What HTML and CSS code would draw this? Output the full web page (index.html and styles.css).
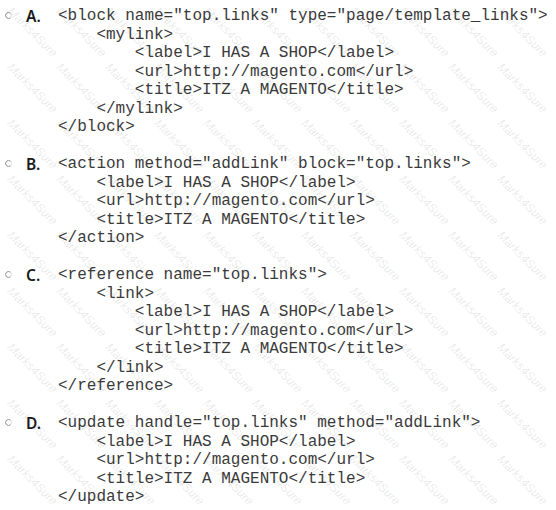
FILE: index.html
```html
<!DOCTYPE html>
<html lang="en">
<head>
<meta charset="utf-8">
<title>Layout XML options</title>
<link rel="stylesheet" href="styles.css">
</head>
<body>
<div class="page">
  <div class="watermark" aria-hidden="true">
    <span class="wm">Marks4Sure</span><span class="wm">Marks4Sure</span><span class="wm">Marks4Sure</span><span class="wm">Marks4Sure</span><span class="wm">Marks4Sure</span><span class="wm">Marks4Sure</span><span class="wm">Marks4Sure</span><span class="wm">Marks4Sure</span><span class="wm">Marks4Sure</span><span class="wm">Marks4Sure</span><span class="wm">Marks4Sure</span>
    <span class="wm">Marks4Sure</span><span class="wm">Marks4Sure</span><span class="wm">Marks4Sure</span><span class="wm">Marks4Sure</span><span class="wm">Marks4Sure</span><span class="wm">Marks4Sure</span><span class="wm">Marks4Sure</span><span class="wm">Marks4Sure</span><span class="wm">Marks4Sure</span><span class="wm">Marks4Sure</span><span class="wm">Marks4Sure</span>
    <span class="wm">Marks4Sure</span><span class="wm">Marks4Sure</span><span class="wm">Marks4Sure</span><span class="wm">Marks4Sure</span><span class="wm">Marks4Sure</span><span class="wm">Marks4Sure</span><span class="wm">Marks4Sure</span><span class="wm">Marks4Sure</span><span class="wm">Marks4Sure</span><span class="wm">Marks4Sure</span><span class="wm">Marks4Sure</span>
    <span class="wm">Marks4Sure</span><span class="wm">Marks4Sure</span><span class="wm">Marks4Sure</span><span class="wm">Marks4Sure</span><span class="wm">Marks4Sure</span><span class="wm">Marks4Sure</span><span class="wm">Marks4Sure</span><span class="wm">Marks4Sure</span><span class="wm">Marks4Sure</span><span class="wm">Marks4Sure</span><span class="wm">Marks4Sure</span>
    <span class="wm">Marks4Sure</span><span class="wm">Marks4Sure</span><span class="wm">Marks4Sure</span><span class="wm">Marks4Sure</span><span class="wm">Marks4Sure</span><span class="wm">Marks4Sure</span><span class="wm">Marks4Sure</span><span class="wm">Marks4Sure</span><span class="wm">Marks4Sure</span><span class="wm">Marks4Sure</span><span class="wm">Marks4Sure</span>
    <span class="wm">Marks4Sure</span><span class="wm">Marks4Sure</span><span class="wm">Marks4Sure</span><span class="wm">Marks4Sure</span><span class="wm">Marks4Sure</span><span class="wm">Marks4Sure</span><span class="wm">Marks4Sure</span><span class="wm">Marks4Sure</span><span class="wm">Marks4Sure</span><span class="wm">Marks4Sure</span><span class="wm">Marks4Sure</span>
    <span class="wm">Marks4Sure</span><span class="wm">Marks4Sure</span><span class="wm">Marks4Sure</span><span class="wm">Marks4Sure</span><span class="wm">Marks4Sure</span><span class="wm">Marks4Sure</span><span class="wm">Marks4Sure</span><span class="wm">Marks4Sure</span><span class="wm">Marks4Sure</span><span class="wm">Marks4Sure</span><span class="wm">Marks4Sure</span>
    <span class="wm">Marks4Sure</span><span class="wm">Marks4Sure</span><span class="wm">Marks4Sure</span><span class="wm">Marks4Sure</span><span class="wm">Marks4Sure</span><span class="wm">Marks4Sure</span><span class="wm">Marks4Sure</span><span class="wm">Marks4Sure</span><span class="wm">Marks4Sure</span><span class="wm">Marks4Sure</span><span class="wm">Marks4Sure</span>
    <span class="wm">Marks4Sure</span><span class="wm">Marks4Sure</span><span class="wm">Marks4Sure</span><span class="wm">Marks4Sure</span><span class="wm">Marks4Sure</span><span class="wm">Marks4Sure</span><span class="wm">Marks4Sure</span><span class="wm">Marks4Sure</span><span class="wm">Marks4Sure</span><span class="wm">Marks4Sure</span><span class="wm">Marks4Sure</span>
  </div>

  <div class="options">
    <div class="option">
      <span class="radio"><svg width="7" height="7" viewBox="0 0 7 7"><path d="M5.6 1.3 A3 3 0 1 0 5.6 5.7" fill="none" stroke="#8a8a8a" stroke-width="1"/><path d="M5.6 1.3 A3 3 0 0 1 5.6 5.7" fill="none" stroke="#dadada" stroke-width="1"/></svg></span>
      <span class="letter">A.</span>
      <pre class="code">&lt;block name="top.links" type="page/template_links"&gt;
    &lt;mylink&gt;
        &lt;label&gt;I HAS A SHOP&lt;/label&gt;
        &lt;url&gt;http://magento.com&lt;/url&gt;
        &lt;title&gt;ITZ A MAGENTO&lt;/title&gt;
    &lt;/mylink&gt;
&lt;/block&gt;</pre>
    </div>

    <div class="option">
      <span class="radio"><svg width="7" height="7" viewBox="0 0 7 7"><path d="M5.6 1.3 A3 3 0 1 0 5.6 5.7" fill="none" stroke="#8a8a8a" stroke-width="1"/><path d="M5.6 1.3 A3 3 0 0 1 5.6 5.7" fill="none" stroke="#dadada" stroke-width="1"/></svg></span>
      <span class="letter">B.</span>
      <pre class="code">&lt;action method="addLink" block="top.links"&gt;
    &lt;label&gt;I HAS A SHOP&lt;/label&gt;
    &lt;url&gt;http://magento.com&lt;/url&gt;
    &lt;title&gt;ITZ A MAGENTO&lt;/title&gt;
&lt;/action&gt;</pre>
    </div>

    <div class="option">
      <span class="radio"><svg width="7" height="7" viewBox="0 0 7 7"><path d="M5.6 1.3 A3 3 0 1 0 5.6 5.7" fill="none" stroke="#8a8a8a" stroke-width="1"/><path d="M5.6 1.3 A3 3 0 0 1 5.6 5.7" fill="none" stroke="#dadada" stroke-width="1"/></svg></span>
      <span class="letter">C.</span>
      <pre class="code">&lt;reference name="top.links"&gt;
    &lt;link&gt;
        &lt;label&gt;I HAS A SHOP&lt;/label&gt;
        &lt;url&gt;http://magento.com&lt;/url&gt;
        &lt;title&gt;ITZ A MAGENTO&lt;/title&gt;
    &lt;/link&gt;
&lt;/reference&gt;</pre>
    </div>

    <div class="option">
      <span class="radio"><svg width="7" height="7" viewBox="0 0 7 7"><path d="M5.6 1.3 A3 3 0 1 0 5.6 5.7" fill="none" stroke="#8a8a8a" stroke-width="1"/><path d="M5.6 1.3 A3 3 0 0 1 5.6 5.7" fill="none" stroke="#dadada" stroke-width="1"/></svg></span>
      <span class="letter">D.</span>
      <pre class="code">&lt;update handle="top.links" method="addLink"&gt;
    &lt;label&gt;I HAS A SHOP&lt;/label&gt;
    &lt;url&gt;http://magento.com&lt;/url&gt;
    &lt;title&gt;ITZ A MAGENTO&lt;/title&gt;
&lt;/update&gt;</pre>
    </div>
  </div>
</div>
</body>
</html>
```

FILE: styles.css
```css
html, body {
  margin: 0;
  padding: 0;
  background: #ffffff;
}

.page {
  position: relative;
  width: 556px;
  height: 510px;
  overflow: hidden;
  background: #ffffff;
}

.watermark {
  position: absolute;
  inset: 0;
  padding: 4px 6px 0 8px;
  display: grid;
  grid-template-columns: repeat(11, 49px);
  grid-auto-rows: 56px;
  pointer-events: none;
  z-index: 0;
}

.wm {
  display: flex;
  align-items: center;
  justify-content: center;
  font-family: "Liberation Sans", sans-serif;
  font-style: italic;
  font-size: 12px;
  line-height: 14px;
  white-space: nowrap;
  color: rgba(0, 0, 0, 0.1);
  transform: rotate(45deg);
}

.options {
  position: relative;
  z-index: 1;
  display: flex;
  flex-direction: column;
  gap: 18.5px;
  padding: 7px 0 0 0;
}

.option {
  display: grid;
  grid-template-columns: 26px 32px 1fr;
  align-items: start;
}

.radio {
  display: flex;
  align-items: center;
  height: 18.5px;
  padding-left: 5px;
  margin-top: -1px;
}

.radio svg {
  display: block;
}

.letter {
  font-family: "Noto Sans", "DejaVu Sans", sans-serif;
  font-weight: 600;
  font-size: 15.5px;
  line-height: 18.5px;
  color: #1a1a1a;
  padding-left: 0;
}

.code {
  margin: 0;
  font-family: "Liberation Mono", "Courier New", monospace;
  font-size: 16px;
  line-height: 18.5px;
  color: #3a3a3a;
  white-space: pre;
}
```
